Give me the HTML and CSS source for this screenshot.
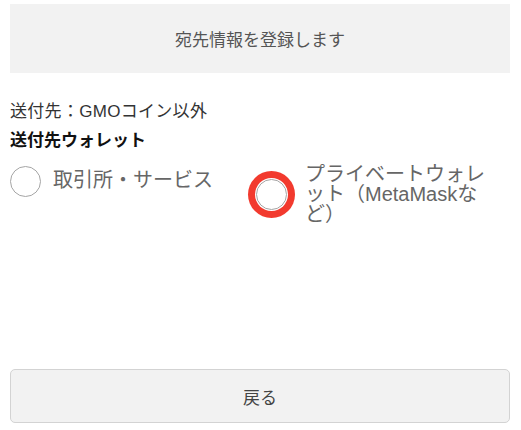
FILE: index.html
```html
<!DOCTYPE html>
<html lang="ja">
<head>
    <meta charset="UTF-8">
    <meta name="viewport" content="width=device-width, initial-scale=1.0">
    <title>宛先情報の登録</title>
    <link rel="stylesheet" href="styles.css">
</head>
<body>

<div class="page">
    <div class="header">宛先情報を登録します</div>

    <p class="dest">送付先：GMOコイン以外</p>
    <p class="section-title">送付先ウォレット</p>

    <div class="options">
        <label class="option">
            <input type="radio" name="wallet" value="exchange">
            <span class="option-text">取引所・サービス</span>
        </label>
        <label class="option option-focus">
            <input type="radio" name="wallet" value="private">
            <span class="option-text">プライベートウォレット（MetaMaskなど）</span>
        </label>
    </div>

    <button class="back-btn" onclick="history.back()">戻る</button>
</div>

</body>
</html>
```

FILE: styles.css
```css
* {
    box-sizing: border-box;
}
body {
    font-family: "Liberation Sans", "Noto Sans CJK JP", sans-serif;
    background-color: #fff;
    margin: 0;
}
.page {
    display: flex;
    flex-direction: column;
    height: 100vh;
    padding: 4px 11px 7px 10px;
}
.header {
    height: 69px;
    background-color: #f2f2f2;
    color: #555;
    font-size: 17px;
    display: flex;
    align-items: center;
    justify-content: center;
}
.dest {
    margin: 25px 0 0;
    font-size: 17px;
    letter-spacing: 0.3px;
    line-height: 28px;
    color: #333;
}
.section-title {
    margin: 1px 0 0;
    font-size: 17px;
    line-height: 28px;
    font-weight: bold;
    color: #111;
}
.options {
    display: grid;
    grid-template-columns: 240px 1fr;
    align-items: start;
    margin-top: 9px;
}
.option {
    display: flex;
    align-items: center;
    gap: 12px;
    color: #666;
    font-size: 20px;
    line-height: 20px;
    cursor: pointer;
}
.option:first-child {
    padding-top: 2px;
}
.option:first-child .option-text {
    margin-top: -4px;
}
.option-focus {
    padding-right: 15px;
}
.option input {
    appearance: none;
    -webkit-appearance: none;
    flex: none;
    width: 31px;
    height: 31px;
    margin: 0;
    border: 1.5px solid #a5a5a5;
    border-radius: 50%;
    background-color: #fff;
}
.option-focus input {
    margin: 0 6px;
    box-shadow: 0 0 0 1px #fff, 0 0 0 8px #f23a2e;
}
.back-btn {
    margin-top: auto;
    height: 54px;
    width: 100%;
    background-color: #f2f2f2;
    border: 1px solid #d3d3d3;
    border-radius: 5px;
    color: #444;
    font-family: inherit;
    font-size: 17px;
    cursor: pointer;
}
```
